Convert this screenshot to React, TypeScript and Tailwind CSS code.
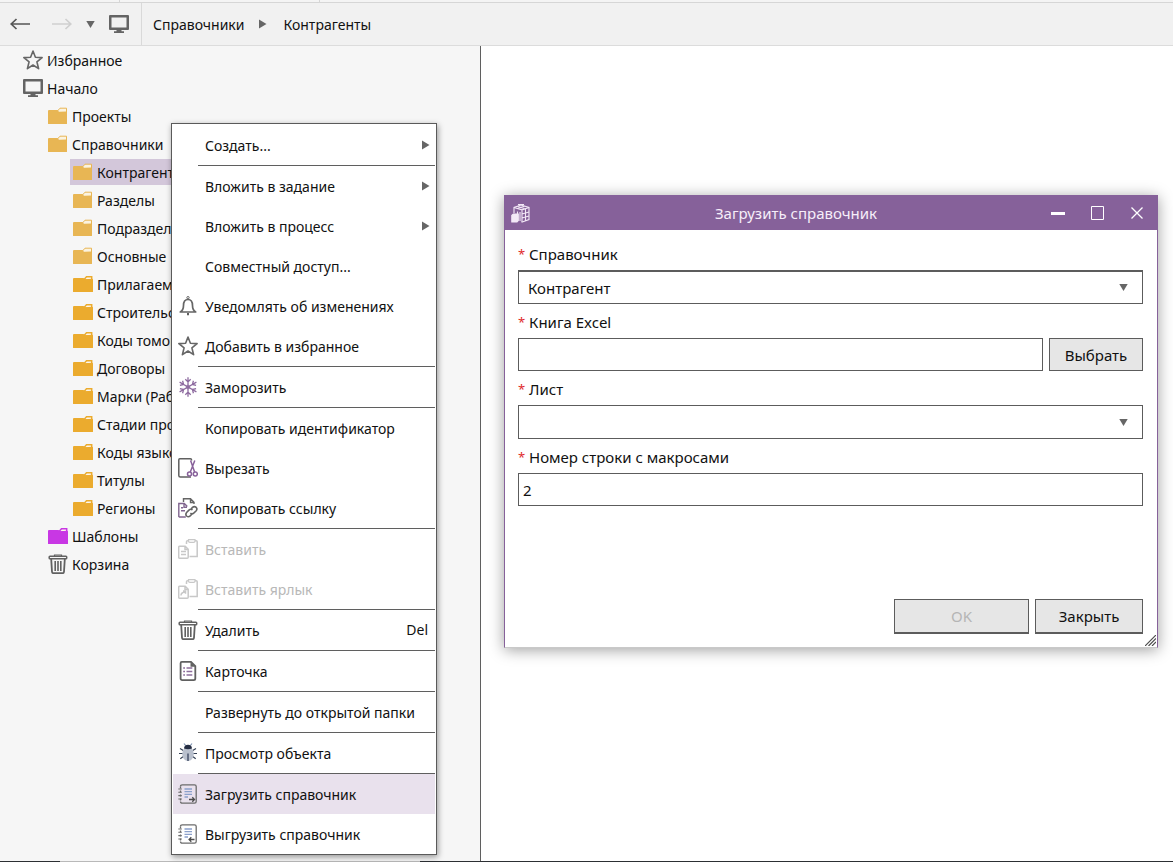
import React, { useState } from 'react'

interface IconProps {
  className?: string
}

const ArrowIcon: React.FC<IconProps> = ({ className }) => (
  <svg className={className} width="20" height="12" viewBox="0 0 20 12" fill="none" stroke="currentColor" strokeWidth="1.7">
    <path d="M20 6H1M6.500 1L1.200 6l5.300 5" />
  </svg>
)

const MonitorIcon: React.FC<IconProps> = ({ className }) => (
  <svg className={className} width="20" height="18" viewBox="0 0 20 18" fill="#646464">
    <path fillRule="evenodd" d="M1 0h18q1 0 1 1v13q0 1-1 1H1q-1 0-1-1V1q0-1 1-1zM2.500 2.500v10h15v-10z" />
    <path d="M7.500 15h5v1.300h2.500V18H5v-1.700h2.500z" />
  </svg>
)

const StarIcon: React.FC<IconProps> = ({ className }) => (
  <svg className={className} width="20" height="20" viewBox="0 0 20 20" fill="none" stroke="#666" strokeWidth="1.6" strokeLinejoin="round">
    <path d="M10 1l2.400 6.200 6.700.4-5.200 4.200 1.700 6.900L10 15l-5.600 3.700 1.700-6.900L.9 7.600l6.700-.4z" />
  </svg>
)

const FolderIcon: React.FC<{ kind: string }> = ({ kind }) => {
  // open folders are paler and have a light tab
  if (kind === 'open') {
    return (
      <svg width="20" height="18" viewBox="0 0 20 18">
        <path d="M9 4.500L12 1.200h6.500V6H9z" fill="#fbf3e0" stroke="#e8b654" strokeWidth="1" />
        <path d="M1 3h8.500l1.200 1.500q.5.500 1.200.300L18 4.500q1 0 1 1v11q0 .5-.5.500H.5q-.5 0-.5-.5V4q0-1 1-1z" fill="#e8b654" />
      </svg>
    )
  }
  const color = kind === 'purple' ? '#c837e4' : '#ebab2e'
  return (
    <svg width="20" height="18" viewBox="0 0 20 18">
      <path d="M11.500 4L13.500 1.800h5.200V5h-7z" fill="#fdf6ea" stroke={color} strokeWidth="1.5" />
      <path d="M1 3h9.500l1.200.9q.5.400 1 .300L19 3.800q1 0 1 1V16.500q0 .5-.5.500H.5q-.5 0-.5-.5V4q0-1 1-1z" fill={color} />
    </svg>
  )
}

const TrashIcon: React.FC<IconProps> = ({ className }) => (
  <svg className={className} width="20" height="20" viewBox="0 0 20 20" fill="none" stroke="#616161" strokeWidth="1.5">
    <path d="M6.500 2.300V1h7v1.300" strokeWidth="1.200" />
    <rect x="1.200" y="2.300" width="17.500" height="2.500" rx=".8" />
    <path d="M3.200 5l.8 12.800q.1 1.400 1.500 1.400h9q1.400 0 1.500-1.400L16.800 5" strokeWidth="1.800" />
    <path d="M7.200 7V17M10 7V17M12.800 7V17" strokeWidth="1.600" />
  </svg>
)

const BellIcon: React.FC = () => (
  <svg width="20" height="20" viewBox="0 0 20 20" fill="none" stroke="#666" strokeWidth="1.700">
    <circle cx="10" cy="1.700" r="1.200" strokeWidth="1" />
    <path d="M2.300 16c2.300-1.300 3.200-2.800 3.200-6.500C5.500 5.300 7 3.500 10 3.500s4.500 1.800 4.500 6c0 3.700.9 5.200 3.200 6.500z" strokeLinejoin="round" />
    <path d="M9 17v2.200h2V17z" fill="#5f5f5f" stroke="none" />
  </svg>
)

const SnowIcon: React.FC = () => (
  <svg width="20" height="20" viewBox="0 0 20 20" fill="none" stroke="#8d6a9f" strokeWidth="1.300">
    {[0, 60, 120, 180, 240, 300].map((angle) => (
      <path key={angle} transform={`rotate(${angle} 10 10)`} d="M10 10V.3M7.300 2.200L10 4.900l2.700-2.700" />
    ))}
    <circle cx="10" cy="10" r="1.800" strokeWidth=".8" />
  </svg>
)

const CutIcon: React.FC = () => (
  <svg width="20" height="20" viewBox="0 0 20 20" fill="none" stroke="#606060" strokeWidth="1.500">
    <path d="M13.500 2.500V1.800q0-1-1-1H1.800q-1 0-1 1v15.700q0 1.500 1.500 1.500H13" />
    <g stroke="#88619a">
      <path d="M12.600 2.500l4 11.500M16.800 2.500L12.300 14" />
      <circle cx="11.500" cy="16" r="2" />
      <circle cx="17.300" cy="16" r="2" />
    </g>
  </svg>
)

const CopyLinkIcon: React.FC = () => (
  <svg width="20" height="20" viewBox="0 0 20 20" fill="none" stroke="#656565" strokeWidth="1.400">
    <path d="M5.500 4V.8h7l3.500 3.500V6M12.500.8v3.700H16" />
    <path d="M.8 19V5.500h5.500l3 3M6 5.500v3.800h3M.8 19h7" stroke="#80658f" />
    <path d="M3 9.800h2M3 12.800h4" stroke="#80658f" />
    <path d="M12.500 11.700l2-2.300q1.900-1.700 3.700 0 1.500 1.800-.2 3.600l-2.300 2.200q-1.800 1.400-3.300-.2M14.500 12q-1.800-1.600-3.600.1l-2.300 2.400q-1.500 1.800 0 3.500 1.800 1.500 3.600-.1l1.500-1.700" strokeWidth="1.600" />
  </svg>
)

const PasteIcon: React.FC<{ shortcut?: boolean }> = ({ shortcut }) => (
  <svg width="20" height="20" viewBox="0 0 20 20" fill="none" stroke="#c8c8c8" strokeWidth="1.500">
    <path d="M8.500 5V2.800q0-1 1-1h1M17 1.800h1.200q1 0 1 1v14.700H11.500" />
    <path d="M10.500.7h6.500v1.200q0 1.400-1.400 1.400h-3.700q-1.400 0-1.400-1.400z" strokeWidth="1.200" />
    <path d="M.7 8.200q0-1 1-1h5.500l3 3v8q0 1-1 1H1.700q-1 0-1-1zM7 7.200v3.300h3.200" />
    {shortcut ? <path d="M3 16.500q0-3 4-3.500M5 12h2.500v2.800" /> : <path d="M3 12.500h5M3 15.500h5" />}
  </svg>
)

const CardIcon: React.FC = () => (
  <svg width="20" height="20" viewBox="0 0 20 20" fill="none" stroke="#606060" strokeWidth="1.800">
    <path d="M3.800.9H13l4.300 4.300v12.300q0 1.600-1.600 1.600H4.200q-1.600 0-1.600-1.600V2.200Q2.600.9 3.800.9z" />
    <path d="M12.500 1v4.700h4.700z" fill="#606060" stroke="none" />
    <path d="M5.200 7h1.800M5.200 10.500h1.800M5.200 14h1.800M8.500 7h5.800M8.500 10.500h5.800M8.500 14h5.800" stroke="#8d6d9c" strokeWidth="1.400" />
  </svg>
)

const BugIcon: React.FC = () => (
  <svg width="20" height="20" viewBox="0 0 20 20" fill="none">
    <path d="M6 .5l1.700 2.200M14 .5l-1.700 2.200" stroke="#7f93b0" strokeWidth="1.100" />
    <path d="M5.300 7.500L2 5.500M5 10.500H1M5.300 13.500l-3 2.200M14.700 7.500l3.300-2M15 10.500h4M14.700 13.500l3 2.200" stroke="#344054" strokeWidth="1.200" />
    <ellipse cx="10" cy="11" rx="5.800" ry="7" fill="#b9c0cd" />
    <path d="M6 5.500Q6.300 1.800 10 1.800t4 3.700q-4 1.400-8 0z" fill="#252d43" />
    <path d="M10 10.500V18" stroke="#48536b" strokeWidth="1.500" />
  </svg>
)

const BookIcon: React.FC<{ dir: 'in' | 'out' }> = ({ dir }) => (
  <svg width="20" height="20" viewBox="0 0 20 20" fill="none" stroke="#6c6c6c" strokeWidth="1.300">
    <path d="M2.500 2.500q0-1.700 1.700-1.700h12.300q1.700 0 1.700 1.700v15q0 1.700-1.700 1.700H4.200q-1.700 0-1.700-1.700" />
    <path d="M2.500 2.500v15" strokeDasharray="2 2" />
    <path d="M.3 5h3.500M.3 8.300h3.500M.3 11.600h3.500M.3 15h3.500" strokeWidth="1.100" />
    <path d="M6.500 5h7.500M6.500 7.700h7.500M6.500 10.400h7.500M6.500 13h3.500" stroke="#8ba0cb" />
    <path d={dir === 'in' ? 'M11 15.500h5.500M14.300 13.300l2.200 2.200-2.200 2.200' : 'M16.500 15.500H11M13.300 13.300l-2.200 2.200 2.200 2.200'} stroke="#4c4c4c" />
  </svg>
)

const AppIcon: React.FC = () => (
  <svg width="20" height="20" viewBox="0 0 20 20" fill="none" stroke="#f3e9f7" strokeWidth="1.100">
    <path d="M3 10V4.500l7-2.500 8 2.500v12l-7.500 2.800" />
    <path d="M3 4.500l8 2.300 7-2.300M11 7v12M14.500 6v12M11 11l7-2M11 15l7-2" />
    <path d="M6.500 3.500l7 2M13.500 3.300l-6.500 2M7 1.500h6" />
    <path d="M6.500 8.500v3M9 9v9" />
    <path d="M.8 12.500l1.500-1.500h5v6.500L6 19H.8z" fill="#f3e9f7" />
  </svg>
)

const Triangle: React.FC<{ down?: boolean }> = ({ down }) => (
  <svg width="9" height="10" viewBox="0 0 9 10" fill="#666">
    <path d={down ? 'M.3 2h8.400L4.500 9z' : 'M1 .5l7.500 4.500L1 9.500z'} />
  </svg>
)

const sections = [
  { name: 'Контрагенты', kind: 'open' },
  { name: 'Разделы', kind: 'open' },
  { name: 'Подразделения', kind: 'open' },
  { name: 'Основные', kind: 'open' },
  { name: 'Прилагаемые', kind: 'closed' },
  { name: 'Строительство', kind: 'closed' },
  { name: 'Коды томов', kind: 'closed' },
  { name: 'Договоры', kind: 'closed' },
  { name: 'Марки (Рабочие)', kind: 'closed' },
  { name: 'Стадии проекта', kind: 'closed' },
  { name: 'Коды языков', kind: 'closed' },
  { name: 'Титулы', kind: 'closed' },
  { name: 'Регионы', kind: 'closed' },
]

interface MenuEntry {
  label: string
  icon?: React.ReactNode
  submenu?: boolean
  hint?: string
  disabled?: boolean
  active?: boolean
}

const menuGroups: MenuEntry[][] = [
  [{ label: 'Создать...', submenu: true }],
  [
    { label: 'Вложить в задание', submenu: true },
    { label: 'Вложить в процесс', submenu: true },
    { label: 'Совместный доступ...' },
    { label: 'Уведомлять об изменениях', icon: <BellIcon /> },
    { label: 'Добавить в избранное', icon: <StarIcon /> },
  ],
  [{ label: 'Заморозить', icon: <SnowIcon /> }],
  [
    { label: 'Копировать идентификатор' },
    { label: 'Вырезать', icon: <CutIcon /> },
    { label: 'Копировать ссылку', icon: <CopyLinkIcon /> },
  ],
  [
    { label: 'Вставить', icon: <PasteIcon />, disabled: true },
    { label: 'Вставить ярлык', icon: <PasteIcon shortcut />, disabled: true },
  ],
  [{ label: 'Удалить', icon: <TrashIcon />, hint: 'Del' }],
  [{ label: 'Карточка', icon: <CardIcon /> }],
  [{ label: 'Развернуть до открытой папки' }],
  [{ label: 'Просмотр объекта', icon: <BugIcon /> }],
  [
    { label: 'Загрузить справочник', icon: <BookIcon dir="in" />, active: true },
    { label: 'Выгрузить справочник', icon: <BookIcon dir="out" /> },
  ],
]

const TreeItem: React.FC<{ icon: React.ReactNode; label: string; pad: string; selected?: boolean }> = ({ icon, label, pad, selected }) => (
  <li className={pad}>
    <button className={`flex h-[26px] w-full items-center gap-1 whitespace-nowrap pl-[3px] text-left ${selected ? 'bg-[#d3c7da]' : ''}`}>
      <span className="flex w-5 shrink-0 justify-center">{icon}</span>
      <span className="pt-[2px]">{label}</span>
    </button>
  </li>
)

const ContextMenu: React.FC = () => (
  <div role="menu" className="absolute left-[171px] top-[77px] w-[266px] border border-[#5a5a5a] bg-white px-px pt-px shadow-[1px_2px_6px_rgba(0,0,0,0.4)]">
    {menuGroups.map((group, index) => (
      <div key={index}>
        {index > 0 && <div className="ml-[25px] h-px bg-[#5f5f5f]" />}
        {group.map((item) => (
          <button
            key={item.label}
            role="menuitem"
            disabled={item.disabled}
            className={`flex h-10 w-full items-center pl-[5px] pr-[5px] text-left whitespace-nowrap ${item.active ? 'bg-[#e9e1ed]' : ''} ${
              item.disabled ? 'text-[#b8b8b8]' : ''
            }`}
          >
            <span className="mr-[7px] h-5 w-5 shrink-0">{item.icon}</span>
            <span className="flex-1 pt-[2px]">{item.label}</span>
            {item.submenu && <Triangle />}
            {item.hint && <span className="pr-[2px]">{item.hint}</span>}
          </button>
        ))}
      </div>
    ))}
  </div>
)

const FieldLabel: React.FC<{ htmlFor: string; children: React.ReactNode }> = ({ htmlFor, children }) => (
  <label htmlFor={htmlFor} className="flex h-[34px] items-center gap-1 pt-[2px]">
    <span className="w-[7px] text-[13px] text-[#e02b2b]">*</span>
    {children}
  </label>
)

const SelectField: React.FC<{ id: string; options: string[]; className?: string }> = ({ id, options, className }) => (
  <div className="grid items-center">
    <select id={id} className={`col-start-1 row-start-1 h-[34px] w-full appearance-none border border-[#5c5c5c] bg-white pl-[9px] pr-8 outline-none ${className || ''}`}>
      {options.map((option) => (
        <option key={option}>{option}</option>
      ))}
    </select>
    <span className="pointer-events-none col-start-1 row-start-1 mr-[15px] justify-self-end">
      <Triangle down />
    </span>
  </div>
)

const ImportDialog: React.FC = () => {
  const [file, setFile] = useState('')
  const [row, setRow] = useState('2')

  return (
    <section
      role="dialog"
      aria-labelledby="dialog-title"
      className="absolute left-[23px] right-[15px] top-[149px] border border-t-0 border-[#86619a] border-b-[#c9c9c9] bg-white text-[15px] shadow-[0_2px_14px_rgba(0,0,0,0.38)]"
    >
      <header className="flex h-[35px] items-center bg-[#86619a] pl-[6px] text-white">
        <AppIcon />
        <h2 id="dialog-title" className="flex-1 pl-[22px] text-center text-[#f6eef9]">Загрузить справочник</h2>
        <div className="flex">
          <button aria-label="Свернуть" className="flex h-[35px] w-[38px] items-center justify-center">
            <svg width="14" height="14" viewBox="0 0 14 14" fill="white"><path d="M0 6h14v3H0z" /></svg>
          </button>
          <button aria-label="Развернуть" className="flex h-[35px] w-10 items-center justify-center">
            <svg width="14" height="14" viewBox="0 0 14 14" fill="none" stroke="white"><path d="M1.500.5h12v13h-12z" /></svg>
          </button>
          <button aria-label="Закрыть окно" className="flex h-[35px] w-10 items-center justify-center">
            <svg width="12" height="12" viewBox="0 0 12 12" stroke="white" strokeWidth="1.300"><path d="M.5.5l11 11M11.500.5l-11 11" /></svg>
          </button>
        </div>
      </header>

      <form className="pl-[13px] pr-[14px] pt-[6px]" onSubmit={(e) => e.preventDefault()}>
        <FieldLabel htmlFor="catalog">Справочник</FieldLabel>
        <SelectField id="catalog" options={['Контрагент']} className="border-t-2" />

        <FieldLabel htmlFor="book">Книга Excel</FieldLabel>
        <div className="flex gap-[6px]">
          <input
            id="book"
            value={file}
            onChange={(e) => setFile(e.target.value)}
            className="h-[33px] min-w-0 flex-1 border border-[#5c5c5c] px-1 outline-none"
          />
          <button type="button" className="h-[33px] w-[94px] border border-[#5c5c5c] bg-[#e6e6e6]">
            Выбрать
          </button>
        </div>

        <FieldLabel htmlFor="sheet">Лист</FieldLabel>
        <SelectField id="sheet" options={['']} />

        <FieldLabel htmlFor="row">Номер строки с макросами</FieldLabel>
        <input
          id="row"
          value={row}
          onChange={(e) => setRow(e.target.value)}
          className="h-[33px] w-full border border-[#5c5c5c] px-1 outline-none"
        />

        <div className="mt-[93px] flex justify-end gap-[6px] pb-[13px]">
          <button type="submit" disabled className="h-[35px] w-[135px] border border-b-2 border-[#5c5c5c] bg-[#e6e6e6] text-[#b5b5b5]">
            OK
          </button>
          <button type="button" className="h-[35px] w-[108px] border border-b-2 border-[#5c5c5c] bg-[#e6e6e6]">
            Закрыть
          </button>
        </div>
      </form>

      {/* Resize grip */}
      <svg className="absolute bottom-[1px] right-[1px]" width="11" height="11" viewBox="0 0 11 11" stroke="#4d4d4d" strokeWidth="1.200">
        <path d="M0 11L11 0M3.500 11L11 3.500M7 11l4-4" />
      </svg>
    </section>
  )
}

const App: React.FC = () => {
  return (
    <div className="flex min-h-screen flex-col bg-white font-['Noto_Sans','Open_Sans',sans-serif] text-[14px] leading-5 text-[#111]">
      {/* Tab strip edge */}
      <div className="flex h-[3px] border-b border-[#d6d6d6] bg-[#f4f4f4]">
        <div className="w-[120px] border-r border-[#d6d6d6]" />
        <div className="w-[200px] border-r border-[#d6d6d6]" />
      </div>

      {/* Navigation */}
      <nav className="flex h-[43px] items-center border-b border-[#dcdcdc] bg-[#f1f1f1]">
        <div className="flex h-full w-[142px] items-center border-r border-[#d9d9d9] pl-[10px]">
          <button aria-label="Назад"><ArrowIcon className="text-[#565656]" /></button>
          <button aria-label="Вперёд" className="ml-[22px]"><ArrowIcon className="rotate-180 text-[#cfcfcf]" /></button>
          <button aria-label="История" className="ml-[14px]"><Triangle down /></button>
          <button aria-label="Начало" className="ml-[14px]"><MonitorIcon /></button>
        </div>
        <a href="#catalogs" className="ml-[11px] pt-[2px]">Справочники</a>
        <span className="mx-[14px]"><Triangle /></span>
        <a href="#partners" className="ml-[2px] pt-[2px]">Контрагенты</a>
      </nav>

      <div className="relative flex flex-1">
        {/* Tree */}
        <aside className="w-[481px] shrink-0 border-r border-[#5f5f5f] bg-[#f6f6f6] pt-px">
          <ul className="flex flex-col gap-[2px]">
            <TreeItem pad="pl-5" icon={<StarIcon />} label="Избранное" />
            <TreeItem pad="pl-5" icon={<MonitorIcon />} label="Начало" />
            <TreeItem pad="pl-[45px]" icon={<FolderIcon kind="open" />} label="Проекты" />
            <TreeItem pad="pl-[45px]" icon={<FolderIcon kind="open" />} label="Справочники" />
            {sections.map((section, index) => (
              <TreeItem
                key={section.name}
                pad="pl-[70px] pr-[60px]"
                icon={<FolderIcon kind={section.kind} />}
                label={section.name}
                selected={index === 0}
              />
            ))}
            <TreeItem pad="pl-[45px]" icon={<FolderIcon kind="purple" />} label="Шаблоны" />
            <TreeItem pad="pl-[45px]" icon={<TrashIcon />} label="Корзина" />
          </ul>
        </aside>

        <main className="relative flex-1">
          <ImportDialog />
        </main>

        <ContextMenu />
      </div>

      {/* Bottom edge */}
      <div className="flex h-px bg-[#2c2f33]">
        <div className="w-[60px]" />
        <div className="w-[360px] bg-[#b9b9b9]" />
      </div>
    </div>
  )
}

export default App
